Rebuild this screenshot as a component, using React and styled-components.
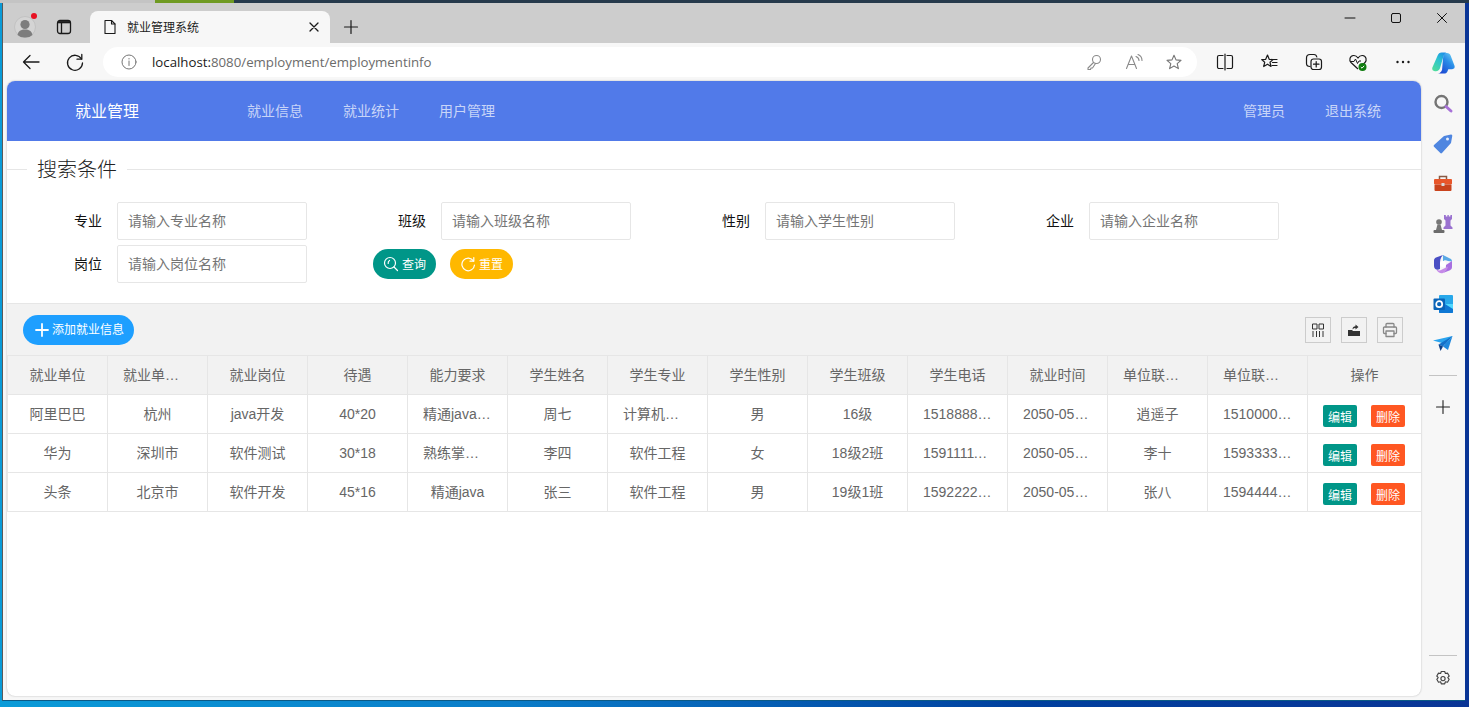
import styled, { createGlobalStyle } from "styled-components"

const GlobalStyle = createGlobalStyle`
  html, body { margin: 0; padding: 0; height: 100%; overflow: hidden; }
  body { font-family: "Liberation Sans", "Noto Sans CJK SC", sans-serif; font-size: 14px; }
  #root { height: 100%; }
  * { box-sizing: border-box; }
`

const Desktop = styled.div`
  width: 1469px;
  height: 707px;
  padding: 3px 4px 6px 2px;
  background:
    linear-gradient(90deg, #c4c4c4 0 155px, #6f9a22 155px 234px, #263a4c 234px) top / 100% 3px no-repeat,
    linear-gradient(90deg, #0a9bd8 0, #0a7cc8 35%, #003f9e 70%, #0a3596 100%);
`

const Browser = styled.div`
  height: 100%;
  display: flex;
  flex-direction: column;
  border-left: 1px solid #5a5a5a;
  border-bottom: 1px solid #0c5a86;
`

const TabStrip = styled.div`
  height: 40px;
  flex: none;
  display: flex;
  align-items: flex-end;
  background: #cdcdcd;
`

const ProfileSlot = styled.div`
  width: 44px;
  height: 32px;
  display: flex;
  align-items: center;
  justify-content: center;
  position: relative;
`

const RedDot = styled.span`
  position: absolute;
  left: 28px;
  top: 2px;
  width: 6px;
  height: 6px;
  border-radius: 50%;
  background: #e81123;
`

const TabToggle = styled.div`
  width: 43px;
  height: 32px;
  padding-right: 10px;
  display: flex;
  align-items: center;
  justify-content: center;
`

const Tab = styled.div`
  width: 240px;
  height: 32px;
  padding: 0 10px 0 12px;
  display: flex;
  align-items: center;
  background: #f7f7f7;
  border-radius: 8px 8px 0 0;
`

const TabTitle = styled.span`
  flex: 1;
  margin-left: 9px;
  padding-bottom: 1px;
  font-size: 12px;
  color: #222;
  font-family: "Noto Sans CJK SC", sans-serif;
`

const NewTab = styled.div`
  width: 42px;
  height: 32px;
  display: flex;
  align-items: center;
  justify-content: center;
`

const WindowControls = styled.div`
  margin-left: auto;
  height: 40px;
  display: flex;
  align-items: flex-start;
`

const WindowButton = styled.div`
  width: 46px;
  height: 30px;
  display: flex;
  align-items: center;
  justify-content: center;
`

const ToolBar = styled.div`
  height: 38px;
  flex: none;
  padding-left: 6px;
  display: flex;
  align-items: center;
  background: #f7f7f7;
`

const NavButton = styled.div`
  width: 44px;
  height: 30px;
  display: flex;
  align-items: center;
  justify-content: center;
`

const AddressBar = styled.div`
  width: 1094px;
  height: 30px;
  margin-left: 6px;
  padding: 0 3px 0 18px;
  display: flex;
  align-items: center;
  background: #fff;
  border-radius: 15px;
`

const Url = styled.span`
  margin-left: 15px;
  flex: 1;
  font-family: "Open Sans", sans-serif;
  font-size: 13.25px;
  color: #6b6b6b;
  b { font-weight: 400; color: #1a1a1a; }
`

const AddressIcon = styled.div`
  width: 40px;
  display: flex;
  justify-content: center;
`

const ToolIcons = styled.div`
  margin-left: 6px;
  flex: 1;
  display: flex;
  align-items: center;
`

const ToolIcon = styled.div`
  width: 44.5px;
  display: flex;
  justify-content: center;
`

const CopilotSlot = styled.div`
  margin-left: -4px;
  width: 44px;
  display: flex;
  justify-content: center;
`

const Body = styled.div`
  flex: 1;
  min-height: 0;
  display: flex;
  background: #f7f7f7;
`

const Page = styled.div`
  width: 1414px;
  margin: 0 0 4px 4px;
  display: flex;
  flex-direction: column;
  background: #fff;
  border-radius: 8px;
  overflow: hidden;
  box-shadow: 0 0 2px rgba(0, 0, 0, 0.28);
`

const Rail = styled.div`
  flex: 1;
  padding: 3px 0 1px;
  display: flex;
  flex-direction: column;
  align-items: center;
`

const RailIcon = styled.div`
  width: 100%;
  height: 40px;
  flex: none;
  display: flex;
  align-items: center;
  justify-content: center;
`

const RailRule = styled.div`
  width: 28px;
  height: 1px;
  flex: none;
  margin: ${(p) => p.$margin};
  background: #c4c4c4;
`

const Header = styled.div`
  height: 60px;
  flex: none;
  padding: 0 20px 2px 68px;
  display: flex;
  align-items: center;
  background: #517ae9;
  font-family: "Noto Sans CJK SC", sans-serif;
`

const Brand = styled.div`
  width: 152px;
  font-weight: 400;
  font-size: 16px;
  color: #fff;
`

const NavItem = styled.a`
  padding: 0 20px;
  font-size: 14px;
  color: rgba(255, 255, 255, 0.7);
`

const Spacer = styled.div`
  flex: 1;
`

const Legend = styled.div`
  height: 20px;
  margin-top: 18px;
  flex: none;
  display: flex;
  align-items: center;
`

const LegendLine = styled.div`
  height: 1px;
  background: #e6e6e6;
  flex: ${(p) => (p.$grow ? 1 : "none")};
  width: ${(p) => (p.$grow ? "auto" : "20px")};
`

const LegendText = styled.div`
  padding: 0 10px;
  font-size: 20px;
  font-weight: 300;
  line-height: 20px;
  color: #222;
  font-family: "Noto Sans CJK SC", sans-serif;
`

const SearchForm = styled.div`
  height: 125px;
  flex: none;
  padding-top: 23px;
  display: grid;
  grid-template-columns: repeat(4, 324px);
  grid-auto-rows: 38px;
  row-gap: 5px;
  align-content: start;
  border-bottom: 1px solid #e6e6e6;
`

const Field = styled.div`
  display: flex;
  align-items: center;
`

const FieldLabel = styled.label`
  width: 95px;
  padding-bottom: 2px;
  text-align: right;
  font-size: 14px;
  color: #111;
  font-family: "Noto Sans CJK SC", sans-serif;
`

const TextInput = styled.input`
  width: 190px;
  height: 38px;
  margin-left: 15px;
  padding: 0 10px 2px;
  border: 1px solid #e6e6e6;
  border-radius: 2px;
  outline: none;
  background: #fff;
  font-family: "Noto Sans CJK SC", sans-serif;
  font-size: 14px;
  &::placeholder { color: #757575; opacity: 1; }
`

const FormActions = styled.div`
  padding-left: 42px;
  display: flex;
  align-items: center;
  gap: 14px;
`

const Pill = styled.button`
  height: 30px;
  padding: 0 10px 2px ${(p) => p.$left || "10px"};
  display: flex;
  align-items: center;
  gap: 3px;
  border: none;
  border-radius: 15px;
  background: ${(p) => p.$color};
  color: #fff;
  font-family: "Noto Sans CJK SC", sans-serif;
  font-size: 12px;
  svg { margin-top: 2px; }
`

const TableTools = styled.div`
  height: 52px;
  flex: none;
  padding: 0 18px 0 16px;
  display: flex;
  align-items: center;
  justify-content: space-between;
  background: #f2f2f2;
  border-bottom: 1px solid #e6e6e6;
`

const ToolGroup = styled.div`
  display: flex;
  gap: 10px;
`

const ToolSquare = styled.div`
  width: 26px;
  height: 26px;
  display: flex;
  align-items: center;
  justify-content: center;
  border: 1px solid #ccc;
`

const Table = styled.table`
  width: 1414px;
  table-layout: fixed;
  border-collapse: separate;
  border-spacing: 0;
  color: #666;
  font-size: 14px;
  font-family: "Liberation Sans", "Noto Sans CJK SC", sans-serif;
`

const HeadCell = styled.th`
  height: 39px;
  padding: 0;
  font-weight: 400;
  background: #f2f2f2;
  border-right: 1px solid #e6e6e6;
  border-bottom: 1px solid #e6e6e6;
  &:first-child { border-left: 1px solid #e6e6e6; }
  &:last-child { border-right: none; }
`

const BodyCell = styled.td`
  height: 39px;
  padding: 0;
  border-right: 1px solid #e6e6e6;
  border-bottom: 1px solid #e6e6e6;
  &:first-child { border-left: 1px solid #e6e6e6; }
  &:last-child { border-right: none; }
`

const CellText = styled.div`
  padding: 0 15px ${(p) => (p.$cjk ? "2px" : "0")};
  overflow: hidden;
  white-space: nowrap;
  text-overflow: ellipsis;
  text-align: center;
`

const RowActions = styled.div`
  padding: 4px 0 0 15px;
  display: flex;
  gap: 14px;
`

const MiniButton = styled.button`
  width: 34px;
  height: 22px;
  padding: 0;
  border: none;
  border-radius: 2px;
  background: ${(p) => p.$color};
  color: #fff;
  font-size: 12px;
  font-family: "Noto Sans CJK SC", sans-serif;
`

const columns = [
  "就业单位", "就业单位地址", "就业岗位", "待遇", "能力要求", "学生姓名", "学生专业",
  "学生性别", "学生班级", "学生电话", "就业时间", "单位联系人", "单位联系电话",
]

const rows = [
  ["阿里巴巴", "杭州", "java开发", "40*20", "精通java开发技术", "周七", "计算机科学与技术", "男", "16级", "15188888888", "2050-05-01", "逍遥子", "15100000000"],
  ["华为", "深圳市", "软件测试", "30*18", "熟练掌握测试工具", "李四", "软件工程", "女", "18级2班", "15911111111", "2050-05-01", "李十", "15933333333"],
  ["头条", "北京市", "软件开发", "45*16", "精通java", "张三", "软件工程", "男", "19级1班", "15922222222", "2050-05-01", "张八", "15944444444"],
]

const hasCjk = (s) => /[\u4e00-\u9fa5]/.test(s)

const Svg = ({ size = 18, vb = 24, children, ...rest }) => (
  <svg width={size} height={size} viewBox={`0 0 ${vb} ${vb}`} fill="none" stroke="currentColor" strokeWidth="1.5" strokeLinecap="round" strokeLinejoin="round" {...rest}>
    {children}
  </svg>
)

const Avatar = () => (
  <svg width="22" height="22" viewBox="0 0 22 22">
    <circle cx="11" cy="11" r="10.5" fill="#d4d4d4" stroke="#c2c2c2" />
    <circle cx="11" cy="8.5" r="4.6" fill="#7d7d7d" />
    <path d="M3.5 19c.6-4.2 3.6-5.6 7.5-5.6s6.900 1.400 7.500 5.600A10.500 10.500 0 0 1 11 21.500 10.500 10.500 0 0 1 3.500 19z" fill="#7d7d7d" />
  </svg>
)

const Star = (props) => (
  <path d="M9 2.200l2 4.700 5 .5-3.800 3.300 1.200 4.900L9 13l-4.400 2.600 1.200-4.900L2 7.400l5-.5z" {...props} />
)

const CopilotLogo = () => (
  <svg width="25" height="23" viewBox="0 0 26 24">
    <defs>
      <linearGradient id="cpA" x1="0.2" y1="1" x2="0.8" y2="0">
        <stop offset="0" stopColor="#4fdc9c" />
        <stop offset="0.55" stopColor="#2cc4cf" />
        <stop offset="1" stopColor="#1e8fe8" />
      </linearGradient>
      <linearGradient id="cpB" x1="0.1" y1="1" x2="0.9" y2="0">
        <stop offset="0" stopColor="#1a3fd0" />
        <stop offset="0.6" stopColor="#2a8de8" />
        <stop offset="1" stopColor="#6fd4f5" />
      </linearGradient>
    </defs>
    <path d="M13 2h3.500c2 0 3.400 1 4 3l4 10.500c.7 2-.5 3.500-2.500 3.500h-4l-.8 2c-.6 1.500-1.800 2.500-3.500 2.500H7c2.500-.3 3.800-1.800 4.500-4z" fill="url(#cpB)" />
    <path d="M7 4.500c.6-1.800 2-3 4-3h5c-1.500.5-2.200 1.500-2.700 3L9.500 17.500c-.7 2.300-2.200 3.500-4.500 3.500H4c-2 0-3.200-1.500-2.700-3.500z" fill="url(#cpA)" />
  </svg>
)

const SearchRailIcon = () => (
  <svg width="22" height="22" viewBox="0 0 22 22" fill="none">
    <circle cx="9.500" cy="9" r="6" stroke="#757575" strokeWidth="2.400" />
    <path d="M14 13.500l5 4.500" stroke="#a872d8" strokeWidth="3" strokeLinecap="round" />
  </svg>
)

const TagIcon = () => (
  <svg width="22" height="22" viewBox="0 0 22 22">
    <path d="M12 3l7-1.500c.7 0 1.300.6 1.300 1.300L19 10l-9 10c-.5.500-1.200.500-1.700 0L2 13.800c-.5-.5-.5-1.200 0-1.700z" fill="#4f86e0" />
    <circle cx="15.500" cy="6" r="1.500" fill="#e6eefc" />
  </svg>
)

const ToolboxIcon = () => (
  <svg width="22" height="22" viewBox="0 0 22 22">
    <path d="M7.500 6V3.500h7V6" fill="none" stroke="#8a5a44" strokeWidth="1.500" />
    <rect x="2" y="6" width="18" height="5.500" rx="1" fill="#e8562a" />
    <rect x="2.500" y="11.500" width="17" height="6.500" rx="1" fill="#c9431d" />
    <rect x="9.500" y="10" width="3" height="3" fill="#d8d8d8" />
  </svg>
)

const ChessIcon = () => (
  <svg width="22" height="22" viewBox="0 0 22 22">
    <path d="M12 2h1.800v1.500h1.600V2h1.400v1.500h1.600V2H20v4l-1.500 1.500v5l2 2V16H11.500v-1.500l2-2v-5L12 6z" fill="#9a72d0" />
    <circle cx="7" cy="9" r="2.800" fill="#777" />
    <path d="M5.500 11.500h3L10 17H4z" fill="#777" />
    <rect x="1.500" y="17" width="11" height="3" rx="1" fill="#6c6c6c" />
  </svg>
)

const M365Icon = () => (
  <svg width="22" height="22" viewBox="0 0 22 22">
    <path d="M11 2l7 3.500c1.500.7 2 1.500 2 3L16 8c-2-1-4-1-5 .5z" fill="#5aa9e6" />
    <path d="M2 7.500C2 6 2.800 5 4 4.500L11 2C8 5 8 8 8 11v5c-3 2-6 0-6-3z" fill="#4a4fc4" />
    <path d="M20 8v6c0 1.500-.7 2.500-2 3.200L11 20c3-2 3-5 3-8z" fill="#a86fe0" />
    <path d="M4 16c2 2 4 1.500 6 .5l6-3c-.5 3-2 4.700-5 6.500-2 1-5 0-7-4z" fill="#c58ae8" />
    <circle cx="11" cy="11" r="3" fill="#fff" />
  </svg>
)

const OutlookIcon = () => (
  <svg width="22" height="22" viewBox="0 0 22 22">
    <rect x="7" y="2" width="14" height="18" rx="1" fill="#28a8ea" />
    <path d="M7 11h14v8a1 1 0 0 1-1 1H8a1 1 0 0 1-1-1z" fill="#0f78d4" />
    <path d="M13 11l8 5v-5z" fill="#50d9ff" />
    <rect x="1.500" y="5.500" width="11.500" height="11.500" rx="1" fill="#0a64b8" />
    <circle cx="7.200" cy="11.200" r="3" fill="none" stroke="#fff" strokeWidth="1.700" />
  </svg>
)

const SendIcon = () => (
  <svg width="22" height="22" viewBox="0 0 22 22">
    <path d="M1 7.500L20.500 3 13.500 11z" fill="#2aa4ee" />
    <path d="M6.500 11.500L20.500 3 11 13.500z" fill="#1470c8" />
    <path d="M6.500 11.500l2 6.500 2.500-4.500z" fill="#0f3f86" />
    <path d="M11 13.500l5 3.500 4.500-14z" fill="#1f88dd" />
  </svg>
)

const App = () => {
  return (
    <>
      <GlobalStyle />
      <Desktop>
        <Browser>
          <TabStrip>
            <ProfileSlot>
              <Avatar />
              <RedDot />
            </ProfileSlot>
            <TabToggle>
              <svg width="16" height="16" viewBox="0 0 16 16" fill="none" stroke="#1a1a1a" strokeWidth="1.300">
                <rect x="1.500" y="1.500" width="13" height="13" rx="2.500" />
                <path d="M5.500 3v11" />
                <path d="M2 3.200h12" strokeWidth="2.200" />
              </svg>
            </TabToggle>
            <Tab>
              <Svg size={16} vb={16} strokeWidth="1.100" color="#1a1a1a">
                <path d="M3 1.500h6.500L13 5v9.500H3z" />
                <path d="M9.500 1.500V5H13" />
              </Svg>
              <TabTitle>就业管理系统</TabTitle>
              <Svg size={12} vb={12} strokeWidth="1.300" color="#1a1a1a">
                <path d="M2 2l8 8M10 2l-8 8" />
              </Svg>
            </Tab>
            <NewTab>
              <Svg size={16} vb={16} strokeWidth="1.200" color="#1a1a1a">
                <path d="M8 1.500v13M1.500 8h13" />
              </Svg>
            </NewTab>
            <WindowControls>
              <WindowButton>
                <Svg size={12} vb={12} strokeWidth="1" color="#111"><path d="M1 6h10" /></Svg>
              </WindowButton>
              <WindowButton>
                <Svg size={12} vb={12} strokeWidth="1" color="#111"><rect x="1.500" y="1.500" width="9" height="9" rx="1.500" /></Svg>
              </WindowButton>
              <WindowButton>
                <Svg size={12} vb={12} strokeWidth="1" color="#111"><path d="M1.500 1.500l9 9M10.500 1.500l-9 9" /></Svg>
              </WindowButton>
            </WindowControls>
          </TabStrip>

          <ToolBar>
            <NavButton>
              <Svg size={20} vb={20} strokeWidth="1.300" color="#1a1a1a"><path d="M18 10H2.500M9 3.500L2.500 10 9 16.500" /></Svg>
            </NavButton>
            <NavButton>
              <Svg size={20} vb={20} strokeWidth="1.300" color="#1a1a1a">
                <path d="M16.500 7A7.500 7.500 0 1 0 17.500 11" />
                <path d="M16.800 2.500V7.200H12" />
              </Svg>
            </NavButton>
            <AddressBar>
              <Svg size={16} vb={16} strokeWidth="1" color="#757575">
                <circle cx="8" cy="8" r="7" />
                <path d="M8 7v4.500M8 4.500v.5" />
              </Svg>
              <Url><b>localhost:</b>8080/employment/employmentinfo</Url>
              <AddressIcon>
                <Svg size={18} vb={18} strokeWidth="1.100" color="#8a8a8a">
                  <circle cx="11.500" cy="6.500" r="4" />
                  <path d="M8.500 9.500L3 15v1.500h2.500L6 15h1.500l3-4.500" />
                </Svg>
              </AddressIcon>
              <AddressIcon>
                <Svg size={18} vb={18} strokeWidth="1.100" color="#8a8a8a">
                  <path d="M1.500 15.500L6.500 3l5 12.500M3.200 11.500h6.600" />
                  <path d="M11 3.500c2 .8 3 2.300 3 4M13 1.500c2.500 1 4 3.500 4 6" />
                </Svg>
              </AddressIcon>
              <AddressIcon>
                <Svg size={18} vb={18} strokeWidth="1.100" color="#757575"><Star /></Svg>
              </AddressIcon>
            </AddressBar>
            <ToolIcons>
              <ToolIcon>
                <Svg size={18} vb={18} strokeWidth="1.200" color="#1a1a1a">
                  <path d="M7 2.500H3a1.500 1.500 0 0 0-1.500 1.500v10A1.500 1.500 0 0 0 3 15.500h4M11 2.500h4A1.500 1.500 0 0 1 16.500 4v10a1.500 1.500 0 0 1-1.500 1.500h-4M9 1v16" />
                </Svg>
              </ToolIcon>
              <ToolIcon>
                <Svg size={18} vb={18} strokeWidth="1.200" color="#1a1a1a">
                  <path d="M7.500 2l1.700 4.300 3.800.3-3 2.700 1 4.200-3.500-2.300-3.800 2.300 1-4.200-3-2.700 4-.3z" />
                  <path d="M12 6.500h5M12.500 9.500h4.500M12 12.500h5" />
                </Svg>
              </ToolIcon>
              <ToolIcon>
                <Svg size={18} vb={18} strokeWidth="1.200" color="#1a1a1a">
                  <path d="M5 13.500c-2 0-3.500-1-3.500-3V5c0-2 1.500-3.500 3.500-3.500h4c1.500 0 2.500 1 2.800 2.500" />
                  <rect x="6" y="6" width="10.500" height="10.500" rx="2.500" />
                  <path d="M11.200 8.500v5.500M8.500 11.200H14" />
                </Svg>
              </ToolIcon>
              <ToolIcon>
                <svg width="20" height="20" viewBox="0 0 20 20" fill="none">
                  <path d="M10 17L3 10.500C1 8.500 1.500 4 5.500 3.500 7.500 3.300 9 4.500 10 6c1-1.500 2.500-2.700 4.500-2.500 4 .5 4.500 5 2.500 7L15 12.500" stroke="#1a1a1a" strokeWidth="1.200" />
                  <path d="M2.500 9.500h3.500l1.500-2.500 2 4.500 1.500-2.500h2" stroke="#1a1a1a" strokeWidth="1" />
                  <circle cx="14.500" cy="15" r="4" fill="#107c10" />
                  <path d="M12.800 15l1.200 1.200 2.200-2.400" stroke="#fff" strokeWidth="1" />
                </svg>
              </ToolIcon>
              <ToolIcon>
                <svg width="18" height="18" viewBox="0 0 18 18">
                  <circle cx="3.500" cy="9" r="1.200" fill="#1a1a1a" />
                  <circle cx="9" cy="9" r="1.200" fill="#1a1a1a" />
                  <circle cx="14.500" cy="9" r="1.200" fill="#1a1a1a" />
                </svg>
              </ToolIcon>
              <CopilotSlot><CopilotLogo /></CopilotSlot>
            </ToolIcons>
          </ToolBar>

          <Body>
            <Page>
              <Header>
                <Brand>就业管理</Brand>
                <NavItem>就业信息</NavItem>
                <NavItem>就业统计</NavItem>
                <NavItem>用户管理</NavItem>
                <Spacer />
                <NavItem>管理员</NavItem>
                <NavItem>退出系统</NavItem>
              </Header>

              <Legend>
                <LegendLine />
                <LegendText>搜索条件</LegendText>
                <LegendLine $grow />
              </Legend>

              <SearchForm>
                <Field>
                  <FieldLabel>专业</FieldLabel>
                  <TextInput placeholder="请输入专业名称" />
                </Field>
                <Field>
                  <FieldLabel>班级</FieldLabel>
                  <TextInput placeholder="请输入班级名称" />
                </Field>
                <Field>
                  <FieldLabel>性别</FieldLabel>
                  <TextInput placeholder="请输入学生性别" />
                </Field>
                <Field>
                  <FieldLabel>企业</FieldLabel>
                  <TextInput placeholder="请输入企业名称" />
                </Field>
                <Field>
                  <FieldLabel>岗位</FieldLabel>
                  <TextInput placeholder="请输入岗位名称" />
                </Field>
                <FormActions>
                  <Pill $color="#009688">
                    <Svg size={16} vb={16} strokeWidth="1.200" color="#fff">
                      <circle cx="7" cy="7" r="5.500" />
                      <path d="M11 11l3.500 3.500M6.500 4.500C5.500 5 5 6 5.200 7.500" />
                    </Svg>
                    查询
                  </Pill>
                  <Pill $color="#ffb800">
                    <Svg size={16} vb={16} strokeWidth="1.200" color="#fff">
                      <path d="M13.500 5A6.300 6.300 0 1 0 14.500 9" />
                      <path d="M13.800 1.500V5.200H10" />
                    </Svg>
                    重置
                  </Pill>
                </FormActions>
              </SearchForm>

              <TableTools>
                <Pill $color="#1e9fff" $left="12px">
                  <Svg size={14} vb={14} strokeWidth="1.800" color="#fff"><path d="M7 1v12M1 7h12" /></Svg>
                  添加就业信息
                </Pill>
                <ToolGroup>
                  <ToolSquare>
                    <Svg size={14} vb={14} strokeWidth="1" color="#333" strokeLinecap="butt" strokeLinejoin="miter">
                      <path d="M1.500 1h4.500v5H1.500zM8 1h4.500v5H8zM2 8v6M5.500 8v6M8.500 8v6M12 8v6" />
                    </Svg>
                  </ToolSquare>
                  <ToolSquare>
                    <svg width="14" height="14" viewBox="0 0 14 14">
                      <path d="M1 7h4l1 1h7v5H1z" fill="#333" />
                      <path d="M5.500 6.500c0-2 1.200-3.200 3-3.200V1.500L11.500 4 8.500 6.500V5c-1.300 0-2.200.5-3 1.500z" fill="#333" />
                    </svg>
                  </ToolSquare>
                  <ToolSquare>
                    <Svg size={16} vb={16} strokeWidth="1.300" color="#888">
                      <path d="M4 5V2.500a1 1 0 0 1 1-1h6a1 1 0 0 1 1 1V5" />
                      <path d="M4 11.500H2.500a1 1 0 0 1-1-1V6a1 1 0 0 1 1-1h11a1 1 0 0 1 1 1v4.500a1 1 0 0 1-1 1H12" />
                      <path d="M4 9h8v5.500H4z" />
                    </Svg>
                  </ToolSquare>
                </ToolGroup>
              </TableTools>

              <Table>
                <colgroup>
                  {columns.map((c, i) => <col key={c} style={{ width: i === 0 ? "101px" : "100px" }} />)}
                  <col style={{ width: "113px" }} />
                </colgroup>
                <thead>
                  <tr>
                    {columns.map((c) => (
                      <HeadCell key={c}><CellText $cjk>{c}</CellText></HeadCell>
                    ))}
                    <HeadCell><CellText $cjk>操作</CellText></HeadCell>
                  </tr>
                </thead>
                <tbody>
                  {rows.map((row) => (
                    <tr key={row[0]}>
                      {row.map((v, i) => (
                        <BodyCell key={i}><CellText $cjk={hasCjk(v)}>{v}</CellText></BodyCell>
                      ))}
                      <BodyCell>
                        <RowActions>
                          <MiniButton $color="#009688">编辑</MiniButton>
                          <MiniButton $color="#ff5722">删除</MiniButton>
                        </RowActions>
                      </BodyCell>
                    </tr>
                  ))}
                </tbody>
              </Table>
            </Page>

            <Rail>
              <RailIcon><SearchRailIcon /></RailIcon>
              <RailIcon><TagIcon /></RailIcon>
              <RailIcon><ToolboxIcon /></RailIcon>
              <RailIcon><ChessIcon /></RailIcon>
              <RailIcon><M365Icon /></RailIcon>
              <RailIcon><OutlookIcon /></RailIcon>
              <RailIcon><SendIcon /></RailIcon>
              <RailRule $margin="11px 0 11px" />
              <RailIcon>
                <Svg size={16} vb={16} strokeWidth="1.100" color="#222"><path d="M8 1.500v13M1.500 8h13" /></Svg>
              </RailIcon>
              <Spacer />
              <RailRule $margin="0 0 3px" />
              <RailIcon>
                <svg width="18" height="18" viewBox="0 0 18 18" fill="none" stroke="#444" strokeWidth="1.150" strokeLinejoin="round">
                  <path d="M7.300 1.500h3.400l.7 2 2.100-.4 1.700 2.900-1.400 1.600 1.400 1.700-1.700 2.900-2.100-.4-.7 2H7.300l-.7-2-2.100.4-1.700-2.900 1.400-1.700L2.800 6l1.700-2.900 2.100.4z" />
                  <circle cx="9" cy="8.600" r="2.100" />
                </svg>
              </RailIcon>
            </Rail>
          </Body>
        </Browser>
      </Desktop>
    </>
  )
}

export default App
